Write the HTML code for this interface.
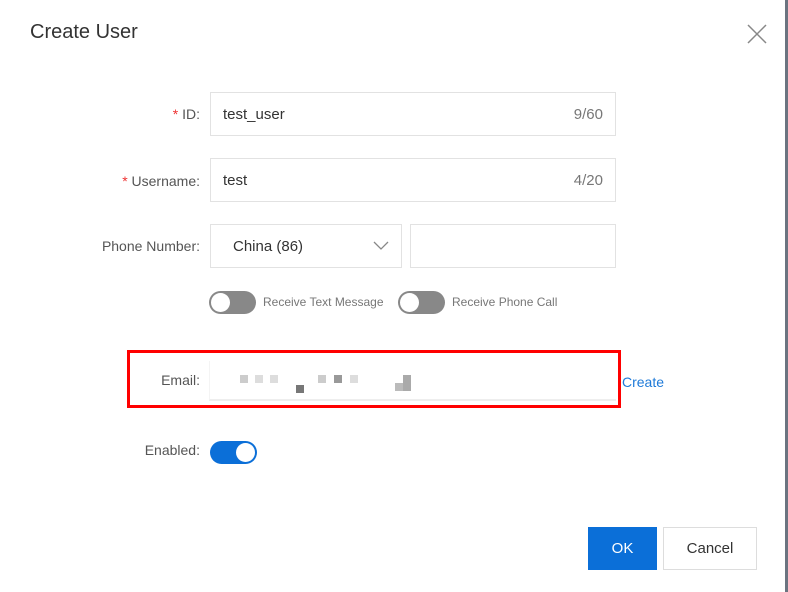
<!DOCTYPE html>
<html><head><style>
body{margin:0;width:788px;height:592px;background:#fff;font-family:"Liberation Sans",sans-serif;position:relative;overflow:hidden;color:#333}
.a{position:absolute}
.lbl{font-size:14px;color:#555;text-align:right;width:200px}
.inp{border:1px solid #e2e2e2;box-sizing:border-box;height:44px;font-size:15px;color:#333}
.sw{width:47px;height:23px;border-radius:12px;background:#888;}
.sw i{position:absolute;top:2px;width:19px;height:19px;border-radius:50%;background:#fff}
.px{position:absolute;width:8px;height:8px}
</style></head><body>
<div class="a" style="right:0;top:0;width:3px;height:592px;background:#6b7480"></div>
<div class="a" style="left:30px;top:21px;font-size:20px;color:#333">Create User</div>
<svg class="a" style="left:747px;top:24px" width="20" height="20"><path d="M1 1L19 19M19 1L1 19" stroke="#888" stroke-width="1.5"/></svg>

<div class="a lbl" style="left:0;top:106px"><span style="color:#e33">* </span>ID:</div>
<div class="a inp" style="left:210px;top:92px;width:406px"><span class="a" style="left:12px;top:13px">test_user</span><span class="a" style="right:12px;top:13px;color:#777">9/60</span></div>
<div class="a lbl" style="left:0;top:173px"><span style="color:#e33">* </span>Username:</div>
<div class="a inp" style="left:210px;top:158px;width:406px"><span class="a" style="left:12px;top:13px">test</span><span class="a" style="right:12px;top:13px;color:#777">4/20</span></div>
<div class="a lbl" style="left:0;top:238px">Phone Number:</div>
<div class="a inp" style="left:210px;top:224px;width:192px"><span class="a" style="left:22px;top:13px">China (86)</span>
<svg class="a" style="left:162px;top:16px" width="16" height="10"><path d="M1 1L8 8L15 1" stroke="#888" fill="none" stroke-width="1.3"/></svg></div>
<div class="a inp" style="left:410px;top:224px;width:206px"></div>

<div class="a sw" style="left:209px;top:291px"><i style="left:2px"></i></div>
<div class="a" style="left:263px;top:295px;font-size:12px;color:#777">Receive Text Message</div>
<div class="a sw" style="left:398px;top:291px"><i style="left:2px"></i></div>
<div class="a" style="left:452px;top:295px;font-size:12px;color:#777">Receive Phone Call</div>

<div class="a" style="left:127px;top:350px;width:487px;height:53px;border:3px solid #f00;box-sizing:content-box;width:488px;height:52px"></div>
<div class="a lbl" style="left:0;top:372px">Email:</div>
<div class="a" style="left:209px;top:361px;width:406px;height:38px;border-bottom:2px solid #eee;border-left:1px solid #f4f4f4"></div>
<div class="px" style="left:240px;top:375px;background:#ccc"></div>
<div class="px" style="left:255px;top:375px;background:#ddd"></div>
<div class="px" style="left:270px;top:375px;background:#ddd"></div>
<div class="px" style="left:296px;top:385px;background:#777"></div>
<div class="px" style="left:318px;top:375px;background:#ccc"></div>
<div class="px" style="left:334px;top:375px;background:#999"></div>
<div class="px" style="left:350px;top:375px;background:#ddd"></div>
<div class="px" style="left:395px;top:383px;background:#bbb"></div>
<div class="px" style="left:403px;top:375px;height:16px;background:#aaa"></div>
<div class="a" style="left:622px;top:374px;font-size:14px;color:#1e7ad8">Create</div>

<div class="a lbl" style="left:0;top:442px">Enabled:</div>
<div class="a sw" style="left:210px;top:441px;background:#0b6fd8"><i style="left:26px"></i></div>

<div class="a" style="left:588px;top:527px;width:69px;height:43px;background:#0b6fd8;color:#fff;font-size:15px;text-align:center;line-height:43px">OK</div>
<div class="a" style="left:663px;top:527px;width:94px;height:43px;border:1px solid #ddd;box-sizing:border-box;color:#333;font-size:15px;text-align:center;line-height:41px">Cancel</div>
</body></html>
